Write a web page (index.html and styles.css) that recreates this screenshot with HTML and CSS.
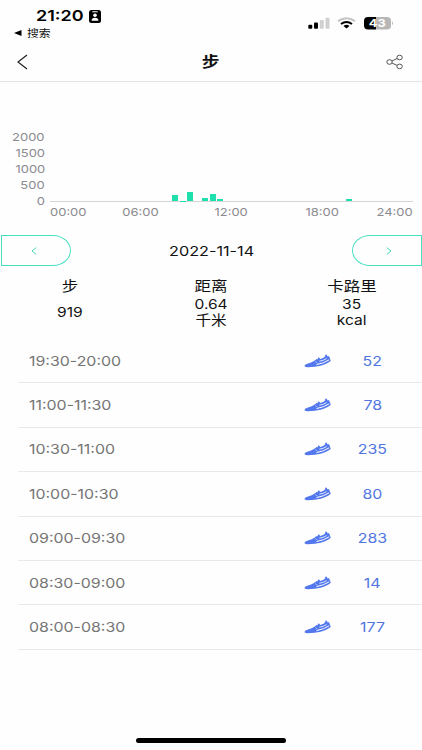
FILE: index.html
```
<!DOCTYPE html>
<html lang="zh-CN">
<head>
<meta charset="utf-8">
<title>步</title>
<link rel="stylesheet" href="styles.css">
</head>
<body>
<div class="screen">
  <header class="status">
    <div class="status-left">
      <div class="clock"><span class="wide left time">21:20</span>
        <svg class="badge" viewBox="0 0 12 13"><rect width="12" height="13" rx="2.5"/><rect x="3.2" y="1.3" width="5.6" height="1" rx=".4" fill="#fff"/><circle cx="6" cy="5.3" r="1.8" fill="#fff"/><path d="M2.7 10.7V9.8Q3 7.8 6 7.8T9.3 9.8V10.7Z" fill="#fff"/></svg>
      </div>
      <div class="return"><svg width="8" height="6" viewBox="0 0 8 6"><path d="M0 3L7.5 0V6Z"/></svg><span class="wide left">搜索</span></div>
    </div>
    <svg class="status-icons" width="86" height="14" viewBox="0 0 86 14">
      <rect x=".3" y="8.7" width="4" height="4" rx="1"/><rect x="6" y="6.4" width="4" height="6.3" rx="1"/>
      <g fill="#d0d0d0"><rect x="11.8" y="4" width="4" height="8.7" rx="1"/><rect x="17.5" y="1.7" width="4" height="11" rx="1"/></g>
      <g fill="none" stroke-width="2"><path d="M30 5.2Q38.5-.5 47 5.2" stroke="#c4c4c4"/><path d="M33 8Q38.5 3.9 44 8" stroke="#000"/></g>
      <path d="M35.5 9.9Q38.5 7.7 41.5 9.9L38.5 12.6Z"/>
      <path d="M68 1H60Q56 1 56 5V9.5Q56 13.5 60 13.5H68Z"/><path d="M68 1H79Q83 1 83 5V9.5Q83 13.5 79 13.5H68Z" fill="#b7b7b7"/>
      <path d="M84 5.3Q86 7.2 84 9.3Z" fill="#b7b7b7"/>
      <text x="69.3" y="11.2" text-anchor="middle" textLength="17" lengthAdjust="spacingAndGlyphs" class="battery">43</text>
    </svg>
  </header>
  <nav class="nav">
    <svg width="11" height="16" viewBox="0 0 11 16"><path d="M10 1L1 8L10 15" fill="none" stroke="#222" stroke-width="1.2"/></svg>
    <h1 class="wide">步</h1>
    <svg width="18" height="16" viewBox="0 0 18 16" fill="none" stroke="#555" stroke-width="1"><ellipse cx="3.5" cy="8" rx="2.7" ry="2.3"/><ellipse cx="13.6" cy="3.5" rx="2.7" ry="2.3"/><ellipse cx="13.6" cy="12.4" rx="2.7" ry="2.3"/><path d="M6 7L11 4.5M6 9L11 11.4"/></svg>
  </nav>
  <section class="chart">
    <div class="y-axis"><span class="wide right">2000</span><span class="wide right">1500</span><span class="wide right">1000</span><span class="wide right">500</span><span class="wide right">0</span></div>
    <div class="plot">
      <div class="bars">
        <i style="grid-column:17;height:5.7px"></i><i style="grid-column:18;height:.4px"></i><i style="grid-column:19;height:9px"></i><i style="grid-column:21;height:2.6px"></i><i style="grid-column:22;height:7.5px"></i><i style="grid-column:23;height:2.5px"></i><i style="grid-column:40;height:1.7px"></i>
      </div>
      <div class="x-axis"><span class="wide left">00:00</span><span class="wide">06:00</span><span class="wide">12:00</span><span class="wide">18:00</span><span class="wide right">24:00</span></div>
    </div>
  </section>
  <section class="date-row">
    <button class="prev"><svg width="6" height="8" viewBox="0 0 6 8"><path d="M5.2.6L1 4L5.2 7.4"/></svg></button>
    <span class="wide date">2022-11-14</span>
    <button class="next"><svg width="6" height="8" viewBox="0 0 6 8"><path d="M.8.6L5 4L.8 7.4"/></svg></button>
  </section>
  <section class="stats">
    <div><b class="wide">步</b><p><span class="wide">919</span></p></div>
    <div><b class="wide">距离</b><p><span class="wide">0.64</span><span class="wide">千米</span></p></div>
    <div><b class="wide">卡路里</b><p><span class="wide">35</span><span class="wide">kcal</span></p></div>
  </section>
  <svg class="defs" width="0" height="0"><symbol id="shoe" viewBox="0 0 28 14"><path d="M.4 12Q.8 10.4 4 9.6Q8 8.6 10.7 6.5L12.6 4.9L13.8 5.2L13.8 3.8L15 3.4L16.4 5L20 3.6Q21.5 2.6 21.3.8L22.4.5L23.8 2.4L25 2L26.8 6.8Q23.5 10 16.5 11.8Q11 13.3 3 13.2Q.6 13 .4 12Z" fill="#5378ee"/><path d="M12.5 10.6Q20 9.2 25.2 5.8" fill="none" stroke="#fefefe" stroke-width="1"/><path d="M11.2 7.6L13.4 9.2" fill="none" stroke="#fefefe" stroke-width=".5"/><path d="M15.4 7.2Q19.5 6.6 22.6 4.6" fill="none" stroke="#fefefe" stroke-width=".8"/></symbol></svg>
  <ul class="list">
    <li><span class="wide left">19:30-20:00</span><svg class="shoe"><use href="#shoe"/></svg><em><span class="wide">52</span></em></li>
    <li><span class="wide left">11:00-11:30</span><svg class="shoe"><use href="#shoe"/></svg><em><span class="wide">78</span></em></li>
    <li><span class="wide left">10:30-11:00</span><svg class="shoe"><use href="#shoe"/></svg><em><span class="wide">235</span></em></li>
    <li><span class="wide left">10:00-10:30</span><svg class="shoe"><use href="#shoe"/></svg><em><span class="wide">80</span></em></li>
    <li><span class="wide left">09:00-09:30</span><svg class="shoe"><use href="#shoe"/></svg><em><span class="wide">283</span></em></li>
    <li><span class="wide left">08:30-09:00</span><svg class="shoe"><use href="#shoe"/></svg><em><span class="wide">14</span></em></li>
    <li><span class="wide left">08:00-08:30</span><svg class="shoe"><use href="#shoe"/></svg><em><span class="wide">177</span></em></li>
  </ul>
  <div class="home"></div>
</div>
</body>
</html>
```
FILE: styles.css
```
* { box-sizing: border-box; margin: 0; padding: 0; }
body { background: #fefefe; font-family: Inter, "Noto Sans CJK SC", sans-serif; color: #111; }
.screen { width: 422px; height: 750px; display: flex; flex-direction: column; overflow: hidden; }
.wide { display: inline-block; transform: scaleX(1.18); white-space: nowrap; }
.left { transform-origin: left; }
.right { transform-origin: right; }
.status { height: 42px; display: flex; justify-content: space-between; padding-right: 28px; }
.status-left { padding-left: 14px; }
.clock { display: flex; align-items: center; height: 18px; margin: 7px 0 0 22px; font-size: 15px; font-weight: 600; line-height: 18px; color: #000; }
.time { width: 53px; transform: scaleX(1.2); }
.badge { width: 12px; height: 13px; }
.return { display: flex; align-items: center; gap: 5px; height: 14px; margin-top: 1px; font-size: 10px; line-height: 14px; }
.status-icons { margin-top: 16px; }
.battery { font-size: 11px; font-weight: 700; fill: #fff; }
.nav { height: 40px; display: grid; grid-template-columns: 1fr auto 1fr; align-items: center; padding: 0 18px 0 17px; border-bottom: 1px solid #e4e4e4; }
.nav > :last-child { justify-self: end; }
.nav h1 { font-size: 15px; line-height: 20px; font-weight: 700; }
.chart { display: flex; height: 153px; padding: 47px 9px 0 0; color: #8b8b90; font-size: 11px; }
.y-axis { width: 50px; padding-right: 5px; display: flex; flex-direction: column; align-items: flex-end; line-height: 16px; }
.plot { flex: 1; }
.bars { height: 73px; display: grid; grid-template-columns: repeat(48, 1fr); align-items: end; border-bottom: 1px solid #d2d6d5; }
.bars i { grid-row: 1; margin: 0 .5px 0 1px; background: #1fdfac; }
.x-axis { display: grid; grid-template-columns: 1fr 2fr 2fr 2fr 1fr; justify-items: center; line-height: 20px; }
.x-axis .left { justify-self: start; }
.x-axis .right { justify-self: end; }
.date-row { height: 31px; display: flex; align-items: center; justify-content: space-between; padding-left: 1px; }
.date-row button { width: 70px; height: 31px; display: flex; align-items: center; justify-content: center; border: 1px solid #48dfc0; background: none; }
.date-row svg { fill: none; stroke: #48d5b8; stroke-width: 1; }
.date-row .prev { border-radius: 0 18px 18px 0 / 0 15.5px 15.5px 0; padding-right: 5px; }
.date-row .next { border-radius: 18px 0 0 18px / 15.5px 0 0 15.5px; padding-left: 5px; }
.date { font-size: 13.2px; transform: scaleX(1.23); }
.stats { height: 73px; display: grid; grid-template-columns: repeat(3, 1fr); padding-top: 11px; text-align: center; font-size: 13.2px; }
.stats b { font-size: 14px; font-weight: 400; line-height: 18px; }
.stats div { display: flex; flex-direction: column; align-items: center; }
.stats p { height: 32px; margin-top: 1px; display: flex; flex-direction: column; justify-content: center; line-height: 16px; }
.defs { display: block; flex: none; }
.list { list-style: none; }
.list li { height: 44.4px; margin-left: 18px; padding-left: 11px; display: flex; align-items: center; justify-content: space-between; border-bottom: 1px solid #e9e9e9; font-size: 13.5px; color: #757575; }
.list li > .wide { width: 275px; }
.shoe { width: 28px; height: 14px; }
.list em { width: 81px; margin-right: 9px; text-align: center; font-style: normal; color: #5176e0; }
.home { width: 150px; height: 4.5px; margin: auto auto 7.5px; border-radius: 3px; background: #000; }
```
